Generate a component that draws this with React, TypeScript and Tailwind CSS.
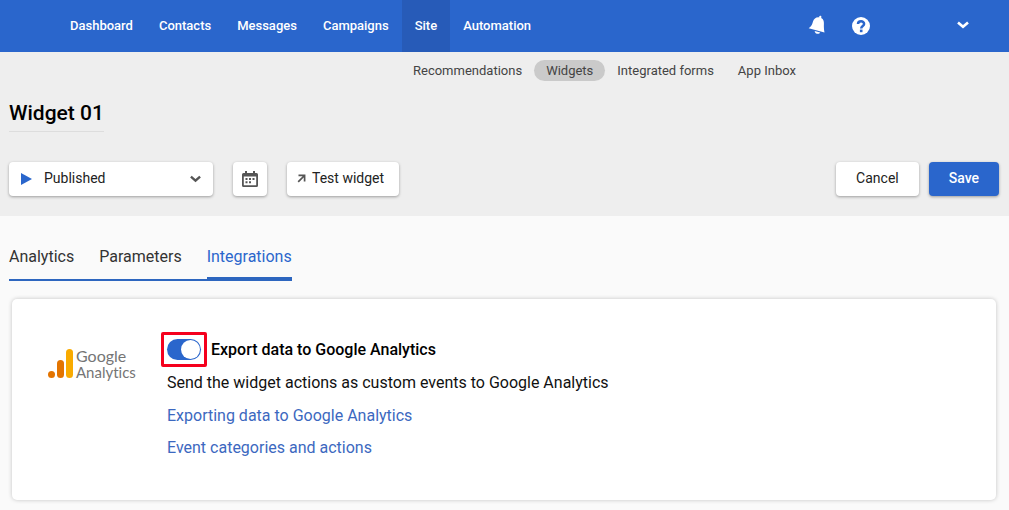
import { useState } from "react";

const NAV = ["Dashboard", "Contacts", "Messages", "Campaigns", "Site", "Automation"];
const SUBNAV = ["Recommendations", "Widgets", "Integrated forms", "App Inbox"];
const TABS = ["Analytics", "Parameters", "Integrations"];

function Chevron({ className }: { className: string }) {
  return (
    <svg viewBox="0 0 12 8" className={className} fill="none" stroke="currentColor" strokeWidth="2.6" aria-hidden="true">
      <path d="M1 1.4 6 5.8 11 1.4" />
    </svg>
  );
}

function TopBar() {
  return (
    <header className="flex h-[52px] justify-between bg-[#2a66cc] pl-[57px] pr-10 text-white">
      <nav className="flex">
        {NAV.map((item) => (
          <a
            key={item}
            href="#"
            className={
              item === "Site"
                ? "flex items-center bg-[#275bb8] px-[13px] text-[13px] font-medium"
                : "flex items-center px-[13px] text-[13px] font-medium"
            }
          >
            {item}
          </a>
        ))}
      </nav>
      <div className="flex items-center pb-0.5">
        <button type="button" aria-label="Notifications" className="mr-[26px]">
          <svg viewBox="0 0 18 20" className="h-5 w-[18px]" fill="currentColor">
            <path d="M11.2 1.6C11.4.2 13.6.4 13.4 2.1L13.2 2.9C15.6 4 16 6.500 15.900 8.500C15.800 12 15.900 14 16.500 17.600L.7 13.200C3.500 11.300 4.200 9.200 5 6.500C5.800 3.800 8.300 1.900 11.200 2.400Z" />
            <path d="M6.600 15.900 12.200 17.400C11.300 19.600 7 19.200 6.600 15.900Z" />
          </svg>
        </button>
        <button type="button" aria-label="Help" className="mr-[87px] pt-0.5">
          <svg viewBox="0 0 18 18" className="h-[18px] w-[18px]">
            <circle cx="9" cy="9" r="9" fill="#fff" />
            <path d="M6 7.100C6 3.400 12.100 3.300 12.100 6.900C12.100 9 9.200 8.900 9.200 11.400" fill="none" stroke="#2a66cc" strokeWidth="2.500" />
            <rect x="7.900" y="12.600" width="2.600" height="2.600" fill="#2a66cc" />
          </svg>
        </button>
        <button type="button" aria-label="Account">
          <Chevron className="h-2 w-3" />
        </button>
      </div>
    </header>
  );
}

function Toolbar() {
  return (
    <div className="mt-[30px] flex items-center">
      <div className="relative mr-5 w-[204px]">
        <select
          aria-label="Status"
          className="block h-[34px] w-full appearance-none rounded bg-white pb-0.5 pl-[35px] pr-8 text-sm text-[#222] shadow-[0_1px_3px_rgba(0,0,0,0.35)]"
        >
          <option>Published</option>
          <option>Draft</option>
        </select>
        <svg viewBox="0 0 11 12" className="pointer-events-none absolute left-3 top-[11px] h-3 w-[11px]" fill="#2a66cc" aria-hidden="true">
          <path d="M0 0 11 6 0 12Z" />
        </svg>
        <Chevron className="pointer-events-none absolute right-3 top-[13px] h-2 w-[11px] text-[#555]" />
      </div>
      <button
        type="button"
        aria-label="Schedule"
        className="mr-5 flex h-[34px] w-[34px] items-center justify-center rounded bg-white text-[#555] shadow-[0_1px_3px_rgba(0,0,0,0.35)]"
      >
        <svg viewBox="0 0 16 16" className="h-4 w-4" fill="currentColor">
          <path fillRule="evenodd" d="M3 0H5V2H11V0H13V2H14.500Q16 2 16 3.500V14.500Q16 16 14.500 16H1.500Q0 16 0 14.500V3.500Q0 2 1.500 2H3ZM1.800 5.500V14.200H14.200V5.500Z" />
          <path d="M7 7H9V9H7ZM10.500 7H12.500V9H10.500ZM3.500 10.200H5.500V12.200H3.500ZM7 10.200H9V12.200H7ZM3.500 7H5.500V9H3.500Z" />
        </svg>
      </button>
      <button
        type="button"
        className="flex h-[34px] items-center rounded bg-white pb-0.5 pl-2.5 pr-[15px] text-sm text-[#222] shadow-[0_1px_3px_rgba(0,0,0,0.35)]"
      >
        <svg viewBox="0 0 9 9" className="mr-1.5 h-[9px] w-[9px]" fill="none" stroke="#555" strokeWidth="1.700" aria-hidden="true">
          <path d="M1.500 1.400H7.600V7.500M7.500 1.500 1.200 7.800" />
        </svg>
        Test widget
      </button>
      <button
        type="button"
        className="ml-auto mr-2.5 h-[34px] rounded bg-white px-5 pb-0.5 text-sm text-[#222] shadow-[0_1px_3px_rgba(0,0,0,0.35)]"
      >
        Cancel
      </button>
      <button
        type="button"
        className="h-[34px] rounded bg-[#2a66cc] px-5 pb-0.5 text-sm font-medium text-white shadow-[0_1px_3px_rgba(0,0,0,0.35)]"
      >
        Save
      </button>
    </div>
  );
}

function GoogleAnalyticsLogo() {
  return (
    <div className="mt-[9px] flex w-[119px] shrink-0 items-start">
      <svg viewBox="0 0 25 29" className="mr-[3px] mt-px h-[29px] w-[25px]" aria-hidden="true">
        <rect x="18" width="7" height="29" rx="3.500" fill="#f9ab00" />
        <rect x="9" y="11" width="7" height="18" rx="3.500" fill="#e37400" />
        <circle cx="3.500" cy="25.500" r="3.500" fill="#e37400" />
      </svg>
      <div className="font-['Lato',sans-serif] text-[#757575] [font-variant-ligatures:none]">
        <div className="text-base leading-4">Google</div>
        <div className="text-[15px] leading-4">Analytics</div>
      </div>
    </div>
  );
}

export default function App() {
  const [enabled, setEnabled] = useState(true);

  return (
    <div className="min-h-screen bg-[#fafafa] font-['Roboto',sans-serif]">
      <TopBar />
      <section className="bg-[#eee] pb-5 pl-[9px] pr-2.5 pt-2">
        <nav className="ml-[392px] flex">
          {SUBNAV.map((item) => (
            <a
              key={item}
              href="#"
              className={
                item === "Widgets"
                  ? "rounded-full bg-[#cacaca] px-3 text-[13px] leading-[21px] text-[#444]"
                  : "px-3 text-[13px] leading-[21px] text-[#444]"
              }
            >
              {item}
            </a>
          ))}
        </nav>
        <h1 className="mt-[18px] w-fit border-b border-[#ddd] pb-1 text-[21px] font-medium leading-7 text-black">
          Widget 01
        </h1>
        <Toolbar />
      </section>

      <main>
        <div role="tablist" className="ml-[9px] mt-[29px] flex w-fit gap-[25px] border-b-2 border-[#2d66bf] text-[#333]">
          {TABS.map((tab) => (
            <button
              key={tab}
              type="button"
              role="tab"
              aria-selected={tab === "Integrations"}
              className={
                tab === "Integrations"
                  ? "h-[34px] border-b-2 border-[#2d66bf] pb-2 text-base text-[#2a66cc]"
                  : "h-[34px] border-b-2 border-transparent pb-2 text-base"
              }
            >
              {tab}
            </button>
          ))}
        </div>

        <section className="ml-3 mr-[13px] mt-[18px] flex rounded-[5px] bg-white pb-10 pl-9 pr-6 pt-10 shadow-[0_0_4px_rgba(0,0,0,0.22)]">
          <GoogleAnalyticsLogo />
          <div className="text-base text-[#111]">
            <label className="flex h-[21px] items-center font-medium text-black">
              <span className="relative mr-2.5 flex h-[21px] w-[34px] items-center rounded-full bg-[#2a66cc] px-px">
                <input
                  type="checkbox"
                  checked={enabled}
                  onChange={(e) => setEnabled(e.target.checked)}
                  className="h-[19px] w-[19px] appearance-none rounded-full bg-white checked:ml-[13px]"
                />
                <span className="pointer-events-none absolute -inset-x-1.5 -inset-y-[7px] rounded-xs border-3 border-[#f5001d]" />
              </span>
              Export data to Google Analytics
            </label>
            <p className="mt-[11px]">Send the widget actions as custom events to Google Analytics</p>
            <a href="#" className="mt-[9px] block w-fit text-[#3c68c0]">
              Exporting data to Google Analytics
            </a>
            <a href="#" className="mt-2 block w-fit text-[#3c68c0]">
              Event categories and actions
            </a>
          </div>
        </section>
      </main>
    </div>
  );
}
